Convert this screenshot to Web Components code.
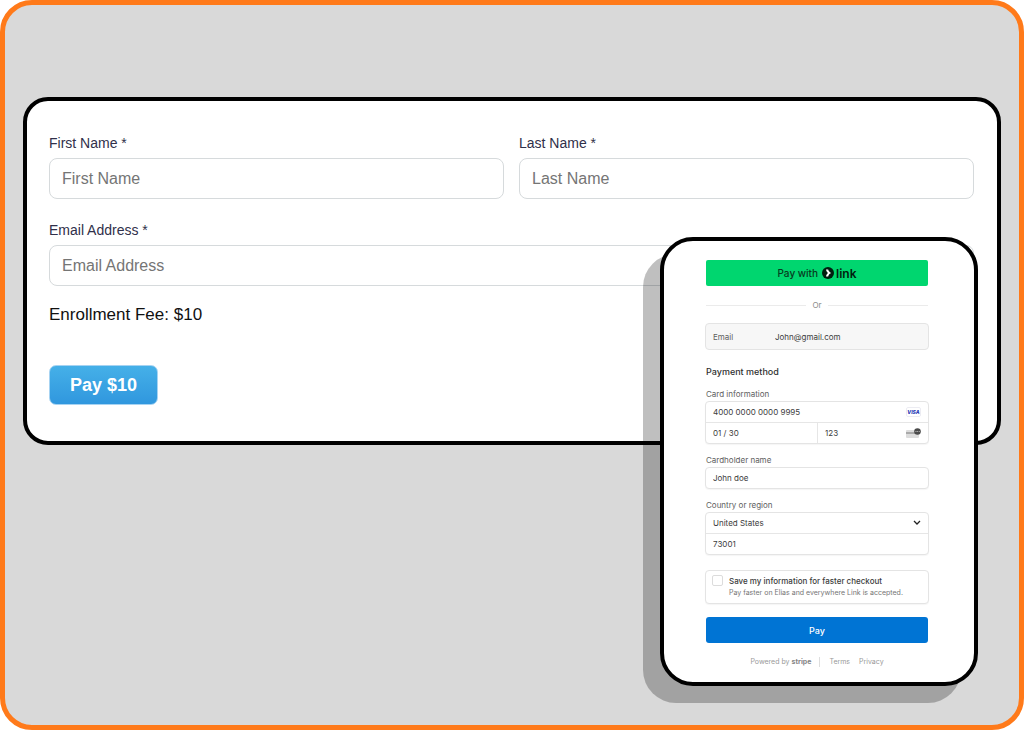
<!DOCTYPE html>
<html lang="en">
<head>
<meta charset="utf-8">
<meta name="viewport" content="width=device-width, initial-scale=1">
<title>Enrollment payment</title>
<style>
body { margin: 0; background: #fff; font-family: "Liberation Sans", Arial, sans-serif; }
</style>
</head>
<body>
<app-stage>
  <enroll-form>
    <text-field label="First Name *" hint="First Name"></text-field>
    <text-field label="Last Name *" hint="Last Name"></text-field>
    <text-field class="wide" label="Email Address *" hint="Email Address"></text-field>
  </enroll-form>
  <checkout-card slot="overlay"></checkout-card>
</app-stage>
<script>
const mount = (el, html) => { el.attachShadow({ mode: "open" }).innerHTML = html; };

customElements.define("app-stage", class extends HTMLElement {
  constructor() {
    super();
    mount(this, `
<style>
:host { display: block; box-sizing: border-box; position: relative; min-height: 100vh;
  border: 5px solid #ff7a1a; border-radius: 32px; background: #d9d9d9; padding: 92px 18px 40px; }
.overlay { position: absolute; top: 232px; right: 41px; }
</style>
<slot></slot>
<div class="overlay"><slot name="overlay"></slot></div>`);
  }
});

customElements.define("text-field", class extends HTMLElement {
  constructor() {
    super();
    mount(this, `
<style>
:host { display: block; min-width: 0; }
label { display: block; font-size: 14px; line-height: 20px; color: #30304a; margin-bottom: 5px; }
input { display: block; box-sizing: border-box; width: 100%; height: 41px; padding: 0 12px; font: 16px "Liberation Sans", Arial, sans-serif;
  border: 1px solid #d6dadc; border-radius: 8px; background: #fff; color: #222; outline: none; }
input::placeholder { color: #757575; opacity: 1; }
</style>
<label for="f"></label><input id="f" type="text">`);
    this.shadowRoot.querySelector("label").textContent = this.getAttribute("label");
    this.shadowRoot.querySelector("input").placeholder = this.getAttribute("hint");
  }
});

customElements.define("enroll-form", class extends HTMLElement {
  constructor() {
    super();
    mount(this, `
<style>
:host { display: block; box-sizing: border-box; border: 4px solid #000; border-radius: 25px; background: #fff; padding: 32px 23px 36px 22px; }
.grid { display: grid; grid-template-columns: 1fr 1fr; gap: 21px 15px; }
::slotted(.wide) { grid-column: 1 / -1; }
p { margin: 17px 0 38px; font-size: 17px; line-height: 24px; color: #111; }
button { display: block; height: 40px; padding: 0 20px; border: 1px solid #a6d3f2; border-radius: 7px;
  background: linear-gradient(#45b0e8, #3097de); color: #fff; font: bold 18px "Liberation Sans", Arial, sans-serif; }
</style>
<form onsubmit="return false">
<div class="grid"><slot></slot></div>
<p>Enrollment Fee: $10</p>
<button type="submit">Pay $10</button>
</form>`);
  }
});

customElements.define("field-box", class extends HTMLElement {
  constructor() {
    super();
    mount(this, `
<style>
:host { display: block; border: 1px solid #e4e4e4; border-radius: 4px; background: #fff; box-shadow: 0 1px 1px rgba(0,0,0,.04); }
</style><slot></slot>`);
  }
});

customElements.define("checkout-card", class extends HTMLElement {
  constructor() {
    super();
    mount(this, `
<style>
:host { display: block; box-sizing: border-box; width: 318px; border: 4px solid #000; border-radius: 33px; background: #fff;
  box-shadow: -17px 17px 0 rgba(0,0,0,.25); padding: 19px 45px 14px 41px; font-family: Inter, sans-serif; font-size: 8px; line-height: 12px; color: #3c3c3c; }
form { display: flex; flex-direction: column; }
button { display: flex; align-items: center; justify-content: center; height: 26px; border: 0; margin: 0 1px; padding: 0; border-radius: 3px; font: 500 9px Inter, sans-serif; color: #fff; background: #0074d4; }
.link { background: #00d66f; color: #073a20; font: 500 10px Inter, sans-serif; gap: 4px; border-radius: 2px; }
.brand { display: flex; align-items: center; gap: 2px; font-weight: 600; font-size: 12px; color: #011e0f; }
.or { display: flex; align-items: center; gap: 6px; margin: 13px 1px 12px; color: #8a8a8a; }
.or::before, .or::after { content: ""; flex: 1; height: 1px; background: #ebebeb; }
.email { background: #f7f7f7; display: flex; height: 25px; align-items: center; padding-left: 7px; box-shadow: none; }
.email label { width: 62px; flex: none; color: #606060; }
input, select { font: inherit; color: inherit; background: none; border: 0; padding: 0; margin: 0; outline: none; min-width: 0; flex: 1; appearance: none; height: 20px; }
h2 { margin: 16px 1px 10px; font-size: 9px; line-height: 12px; font-weight: 500; color: #303030; }
.cap { line-height: 12px; margin: 0 1px 1px; color: #606060; }
.row { display: flex; align-items: center; height: 20px; padding: 0 7px; }
.row + .row, .split { border-top: 1px solid #e6e6e6; }
.split { display: grid; grid-template-columns: minmax(0, 1fr) minmax(0, 1fr); }
.split .row + .row { border-top: 0; border-left: 1px solid #e6e6e6; }
.group { margin-bottom: 10px; }
.save { display: grid; grid-template-columns: 12px 1fr; column-gap: 5px; padding: 4px 6px; margin: 15px 0 13px; }
.save input { box-sizing: border-box; width: 11px; height: 11px; border: 1px solid #dcdcdc; border-radius: 2px; }
.save label { font-weight: 500; }
.save p { grid-column: 2; margin: 0; font-size: 7px; color: #757575; white-space: nowrap; }
footer { display: flex; align-items: center; justify-content: center; margin-top: 13px; font-size: 7px; color: #999; }
footer b { margin-left: 2px; color: #858585; }
footer a { color: inherit; text-decoration: none; }
footer a + a { margin-left: 9px; }
.bar { width: 1px; height: 10px; background: #dedede; margin: 0 9px 0 8px; }
svg { display: block; flex: none; }
</style>
<form onsubmit="return false">
<button class="link" type="button"><span>Pay with</span><span class="brand">
  <svg width="12" height="12" viewBox="0 0 12 12" aria-hidden="true"><circle cx="6" cy="6" r="6" fill="#011e0f"/><path d="M4 2.500h2.200C6.600 4.200 7.700 5.300 9.300 6 7.700 6.700 6.600 7.800 6.200 9.500H4C4.200 8 4.900 6.800 6 6 4.900 5.200 4.200 4 4 2.500z" fill="#fff"/></svg>
  <span>link</span></span></button>
<div class="or">Or</div>
<field-box class="email"><label for="em">Email</label><input id="em" type="email" value="John@gmail.com"></field-box>
<h2>Payment method</h2>
<label class="cap" for="num">Card information</label>
<field-box class="group">
  <div class="row"><input id="num" value="4000 0000 0000 9995">
    <svg width="15" height="10" viewBox="0 0 15 10" role="img" aria-label="Visa"><rect x=".5" y=".5" width="14" height="9" rx="1.500" fill="#fff" stroke="#ececf2"/><text x="7.500" y="7" text-anchor="middle" font-family="Inter, sans-serif" font-size="5" font-weight="800" font-style="italic" fill="#2637b5">VISA</text></svg></div>
  <div class="split">
    <div class="row"><input aria-label="Expiry" value="01 / 30"></div>
    <div class="row"><input aria-label="Security code" value="123">
      <svg width="15" height="11" viewBox="0 0 15 11" aria-hidden="true"><rect x="0" y="2" width="13" height="8" rx="1" fill="#dcdcdc"/><path d="M0 4h13v2H0z" fill="#aaa"/><circle cx="11.500" cy="3.500" r="3.300" fill="#4a4a4a"/><path d="M9.500 3.500h1M11.200 3.500h1M12.900 3.500h.8" stroke="#bbb"/></svg></div>
  </div>
</field-box>
<label class="cap" for="nm">Cardholder name</label>
<field-box class="group"><div class="row"><input id="nm" value="John doe"></div></field-box>
<label class="cap" for="co">Country or region</label>
<field-box>
  <div class="row"><select id="co"><option>United States</option></select>
    <svg width="8" height="6" viewBox="0 0 8 6" aria-hidden="true"><path d="M1 1l3 3 3-3" fill="none" stroke="#222" stroke-width="1.300"/></svg></div>
  <div class="row"><input aria-label="ZIP" value="73001"></div>
</field-box>
<field-box class="save"><input id="sv" type="checkbox"><label for="sv">Save my information for faster checkout</label><p>Pay faster on Elias and everywhere Link is accepted.</p></field-box>
<button type="submit">Pay</button>
<footer><span>Powered by</span><b>stripe</b><span class="bar"></span><a href="#">Terms</a><a href="#">Privacy</a></footer>
</form>`);
  }
});
</script>
</body>
</html>
